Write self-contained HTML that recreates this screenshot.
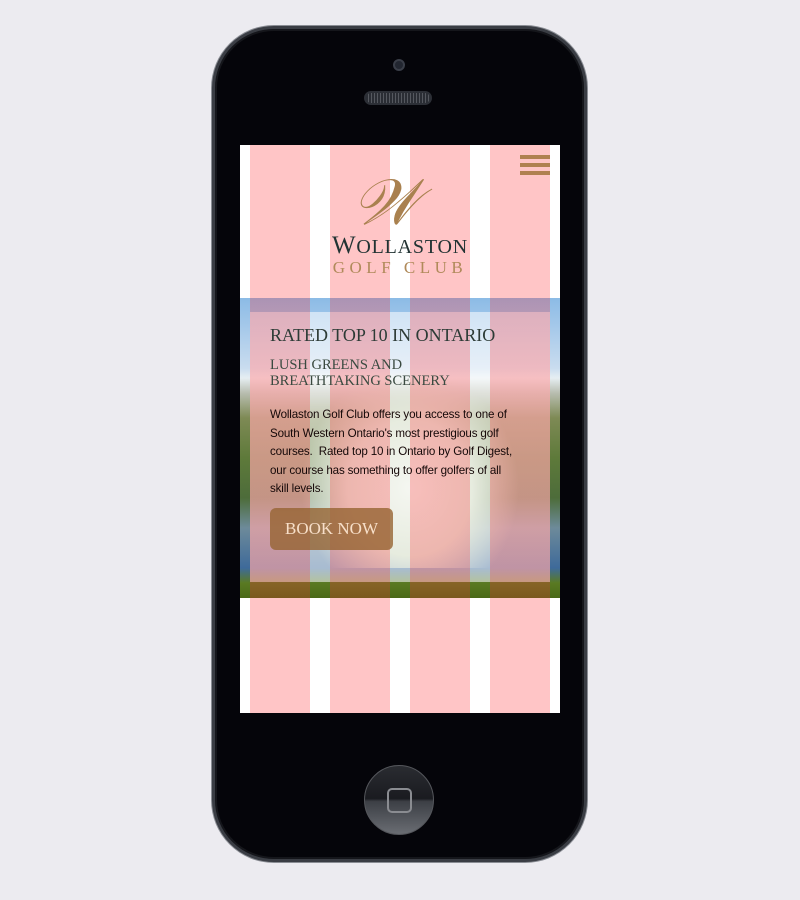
<!DOCTYPE html>
<html><head><meta charset="utf-8"><style>
*{margin:0;padding:0;box-sizing:border-box}
body{width:800px;height:900px;background:#ecebf0;position:relative;overflow:hidden;font-family:"Liberation Sans",sans-serif}
.phone{position:absolute;left:212px;top:26px;width:375px;height:836px;border-radius:62px;background:#05050a;border:3px solid #3a3d44;box-shadow:inset 0 0 0 2px #15161b,0 0 0 1px #8a8d94}
.cam{position:absolute;left:393px;top:59px;width:12px;height:12px;border-radius:50%;background:#222630;border:2px solid #3a3e48}
.spk{position:absolute;left:364px;top:91px;width:68px;height:14px;border-radius:7px;background:repeating-linear-gradient(90deg,#2a2d34 0 2px,#55585f 2px 3px);border:2px solid #2c2f36}
.home{position:absolute;left:364px;top:765px;width:70px;height:70px;border-radius:50%;background:linear-gradient(#2a2c31 0,#1a1b20 48%,#3c3f45 52%,#6a6d73 100%);border:1px solid #55575c}
.home i{position:absolute;left:22px;top:22px;width:25px;height:25px;border:2px solid #8a8c91;border-radius:5px}
.screen{position:absolute;left:240px;top:145px;width:320px;height:568px;background:#fff;overflow:hidden}
.hero{position:absolute;left:0;top:153px;width:320px;height:300px;background:
linear-gradient(180deg,#8cbbe6 0,#c9dcef 70px,#e6eef2 80px,#b8bdb0 95px,#7e8a55 120px,#5e7a3a 160px,#4d6c3a 200px,#6d8a9a 230px,#3e6a9a 270px,#5a7a22 285px,#4a6a18 300px)}
.hero .mid{position:absolute;left:60px;top:70px;width:220px;height:200px;background:radial-gradient(ellipse at 50% 60%,#e8ece0 0,#c9d4b8 40%,transparent 70%)}
.box{position:absolute;left:10px;top:167px;width:300px;height:270px;background:rgba(255,255,255,.55)}
.stripes{position:absolute;left:0;top:0;width:320px;height:568px;background:repeating-linear-gradient(90deg,transparent 0 10px,rgba(255,40,45,.27) 10px 70px,transparent 70px 80px)}
h1{position:absolute;left:30px;top:180px;font:18px "Liberation Serif",serif;color:#2d3b36}
h2{position:absolute;left:30px;top:212px;font:14.5px/16px "Liberation Serif",serif;color:#3a4a40}
p{position:absolute;left:30px;top:261px;width:247px;font:11.6px/18.5px "Liberation Sans",sans-serif;letter-spacing:-.15px;color:#150808}
.btn{position:absolute;left:30px;top:363px;width:123px;height:42px;border-radius:6px;background:rgba(150,100,50,.8);color:#f7dfc9;font:17px/42px "Liberation Serif",serif;text-align:center}
.menu{position:absolute;left:280px;top:10px;width:30px}
.menu b{display:block;height:4px;background:#b08050;margin-bottom:4px}
.logoW{position:absolute;left:112px;top:26px;font:italic 64px/64px "Liberation Serif",serif;color:#a9814f}
.wl{position:absolute;left:0;width:320px;text-align:center;top:87px;font:25px "Liberation Serif",serif;color:#233;letter-spacing:.8px}
.gc{position:absolute;left:0;width:320px;text-align:center;top:113px;font:17px "Liberation Serif",serif;color:#b08a5a;letter-spacing:4.5px}
.top{position:absolute;left:0;top:0;width:320px;height:568px}
</style></head><body>
<div class="phone"></div>
<div class="cam"></div><div class="spk"></div>
<div class="home"><i></i></div>
<div class="screen">
<div class="hero"><div class="mid"></div></div>
<div class="box"></div>
<div class="stripes"></div>
<div class="top">
<div class="menu"><b></b><b></b><b></b></div>
<div class="logoW">𝒲</div>
<div class="wl">W<span style="font-size:20px">OLLASTON</span></div>
<div class="gc">GOLF CLUB</div>
<h1>RATED TOP 10 IN ONTARIO</h1>
<h2>LUSH GREENS AND<br>BREATHTAKING SCENERY</h2>
<p>Wollaston Golf Club offers you access to one of South Western Ontario's most prestigious golf courses.&nbsp; Rated top 10 in Ontario by Golf Digest, our course has something to offer golfers of all skill levels.</p>
<div class="btn">BOOK NOW</div>
</div>
</div>
</body></html>
